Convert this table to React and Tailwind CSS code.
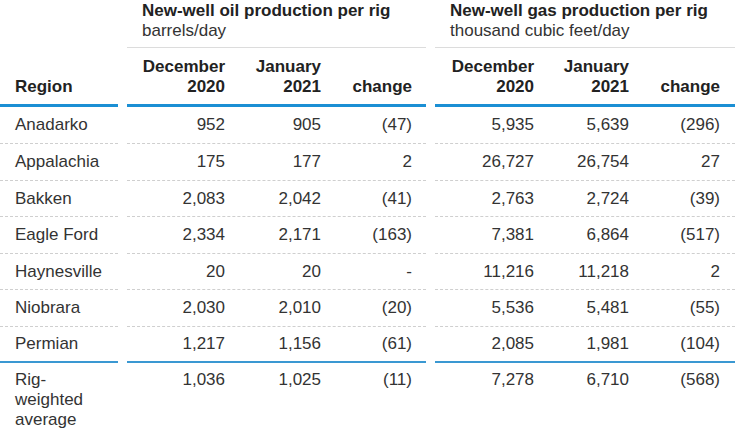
import React from 'react';

// Rows of the rig productivity table
const rows = [
  ['Anadarko', '952', '905', '(47)', '5,935', '5,639', '(296)'],
  ['Appalachia', '175', '177', '2', '26,727', '26,754', '27'],
  ['Bakken', '2,083', '2,042', '(41)', '2,763', '2,724', '(39)'],
  ['Eagle Ford', '2,334', '2,171', '(163)', '7,381', '6,864', '(517)'],
  ['Haynesville', '20', '20', '-', '11,216', '11,218', '2'],
  ['Niobrara', '2,030', '2,010', '(20)', '5,536', '5,481', '(55)'],
  ['Permian', '1,217', '1,156', '(61)', '2,085', '1,981', '(104)'],
];

// row heights alternate a little so the lines land where the original has them
const heights = ['h-[37px]', 'h-[37px]', 'h-[36px]', 'h-[37px]', 'h-[36px]', 'h-[37px]', 'h-[36px]'];

const GroupCells = ({ a, b, c, first }) => (
  <>
    <div className={first ? 'w-[98px] text-right' : 'w-[99px] text-right'}>{a}</div>
    <div className={first ? 'w-[96px] text-right' : 'w-[95px] text-right'}>{b}</div>
    <div className="w-[91px] text-right">{c}</div>
  </>
);

const Row = ({ r, h, last }) => {
  const border = last ? 'border-b-2 border-[#3a98d2]' : 'border-b border-dashed border-[#cfcfcf]';
  return (
    <div className={`flex items-center ${h}`}>
      <div className={`w-[118px] h-full flex items-center pl-[15px] ${border}`}>{r[0]}</div>
      <div className={`ml-[9px] w-[299px] h-full flex items-center ${border}`}>
        <GroupCells a={r[1]} b={r[2]} c={r[3]} first />
      </div>
      <div className={`ml-[9px] w-[300px] h-full flex items-center ${border}`}>
        <GroupCells a={r[4]} b={r[5]} c={r[6]} />
      </div>
    </div>
  );
};

const HeadCols = ({ first }) => (
  <>
    <div className={first ? 'w-[98px] text-right' : 'w-[99px] text-right'}>December<br />2020</div>
    <div className={first ? 'w-[96px] text-right' : 'w-[95px] text-right'}>January<br />2021</div>
    <div className="w-[91px] text-right">change</div>
  </>
);

export default function App() {
  return (
    <div className="w-[740px] h-[433px] overflow-hidden bg-white text-[#333] text-[17px] leading-[20px]" style={{ fontFamily: '"Liberation Sans", Arial, sans-serif' }}>
      {/* group titles */}
      <div className="flex h-[48px]">
        <div className="w-[118px]" />
        <div className="ml-[9px] w-[299px] pl-[15px] pt-[1px] border-b border-[#dcdcdc]">
          <div className="font-bold text-[#222]">New-well oil production per rig</div>
          <div>barrels/day</div>
        </div>
        <div className="ml-[9px] w-[300px] pl-[15px] pt-[1px] border-b border-[#dcdcdc]">
          <div className="font-bold text-[#222]">New-well gas production per rig</div>
          <div>thousand cubic feet/day</div>
        </div>
      </div>
      {/* column headers */}
      <div className="flex h-[59px] font-bold text-[#222]">
        <div className="w-[118px] flex items-end pl-[15px] pb-[7px] border-b-[3px] border-[#1b8fd4]">Region</div>
        <div className="ml-[9px] w-[299px] flex items-end pb-[7px] border-b-[3px] border-[#1b8fd4]">
          <HeadCols first />
        </div>
        <div className="ml-[9px] w-[300px] flex items-end pb-[7px] border-b-[3px] border-[#1b8fd4]">
          <HeadCols />
        </div>
      </div>
      {rows.map((r, i) => (
        <Row key={r[0]} r={r} h={heights[i]} last={i === rows.length - 1} />
      ))}
      {/* weighted average */}
      <div className="flex pt-[7px]">
        <div className="w-[118px] pl-[15px]">Rig-<br />weighted<br />average</div>
        <div className="ml-[9px] w-[299px] flex">
          <GroupCells a="1,036" b="1,025" c="(11)" first />
        </div>
        <div className="ml-[9px] w-[300px] flex">
          <GroupCells a="7,278" b="6,710" c="(568)" />
        </div>
      </div>
    </div>
  );
}
